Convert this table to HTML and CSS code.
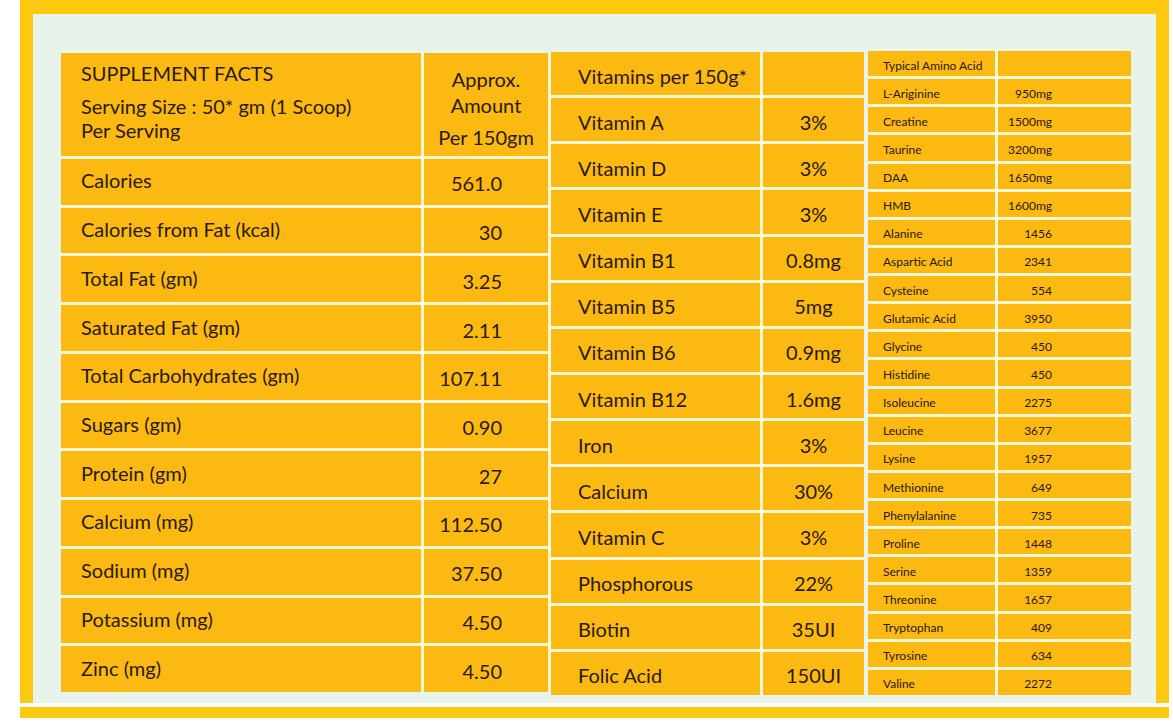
FILE: index.html
```html
<!DOCTYPE html>
<html>
<head>
<meta charset="utf-8">
<link rel="stylesheet" href="styles.css">
</head>
<body>
<div class="frame">
  <div class="panel">
    <div class="t1">
      <div class="cell h1-label">
        <div class="title">SUPPLEMENT FACTS</div>
        <div class="serving">Serving Size : 50* gm (1 Scoop)<br>Per Serving</div>
      </div>
      <div class="cell h1-value">
        <div class="amt">Approx.<br>Amount</div>
        <div class="per">Per 150gm</div>
      </div>
      <div class="cell lab">Calories</div><div class="cell val">561.0</div>
      <div class="cell lab">Calories from Fat (kcal)</div><div class="cell val">30</div>
      <div class="cell lab">Total Fat (gm)</div><div class="cell val">3.25</div>
      <div class="cell lab">Saturated Fat (gm)</div><div class="cell val">2.11</div>
      <div class="cell lab">Total Carbohydrates (gm)</div><div class="cell val">107.11</div>
      <div class="cell lab">Sugars (gm)</div><div class="cell val">0.90</div>
      <div class="cell lab">Protein (gm)</div><div class="cell val">27</div>
      <div class="cell lab">Calcium (mg)</div><div class="cell val">112.50</div>
      <div class="cell lab">Sodium (mg)</div><div class="cell val">37.50</div>
      <div class="cell lab">Potassium (mg)</div><div class="cell val">4.50</div>
      <div class="cell lab">Zinc (mg)</div><div class="cell val">4.50</div>
    </div>
    <div class="t2">
      <div class="cell lab2">Vitamins per 150g*</div><div class="cell val2"></div>
      <div class="cell lab2">Vitamin A</div><div class="cell val2">3%</div>
      <div class="cell lab2">Vitamin D</div><div class="cell val2">3%</div>
      <div class="cell lab2">Vitamin E</div><div class="cell val2">3%</div>
      <div class="cell lab2">Vitamin B1</div><div class="cell val2">0.8mg</div>
      <div class="cell lab2">Vitamin B5</div><div class="cell val2">5mg</div>
      <div class="cell lab2">Vitamin B6</div><div class="cell val2">0.9mg</div>
      <div class="cell lab2">Vitamin B12</div><div class="cell val2">1.6mg</div>
      <div class="cell lab2">Iron</div><div class="cell val2">3%</div>
      <div class="cell lab2">Calcium</div><div class="cell val2">30%</div>
      <div class="cell lab2">Vitamin C</div><div class="cell val2">3%</div>
      <div class="cell lab2">Phosphorous</div><div class="cell val2">22%</div>
      <div class="cell lab2">Biotin</div><div class="cell val2">35UI</div>
      <div class="cell lab2">Folic Acid</div><div class="cell val2">150UI</div>
    </div>
    <div class="t3">
      <div class="cell lab3">Typical Amino Acid</div><div class="cell val3"></div>
      <div class="cell lab3">L-Ariginine</div><div class="cell val3">950mg</div>
      <div class="cell lab3">Creatine</div><div class="cell val3">1500mg</div>
      <div class="cell lab3">Taurine</div><div class="cell val3">3200mg</div>
      <div class="cell lab3">DAA</div><div class="cell val3">1650mg</div>
      <div class="cell lab3">HMB</div><div class="cell val3">1600mg</div>
      <div class="cell lab3">Alanine</div><div class="cell val3">1456</div>
      <div class="cell lab3">Aspartic Acid</div><div class="cell val3">2341</div>
      <div class="cell lab3">Cysteine</div><div class="cell val3">554</div>
      <div class="cell lab3">Glutamic Acid</div><div class="cell val3">3950</div>
      <div class="cell lab3">Glycine</div><div class="cell val3">450</div>
      <div class="cell lab3">Histidine</div><div class="cell val3">450</div>
      <div class="cell lab3">Isoleucine</div><div class="cell val3">2275</div>
      <div class="cell lab3">Leucine</div><div class="cell val3">3677</div>
      <div class="cell lab3">Lysine</div><div class="cell val3">1957</div>
      <div class="cell lab3">Methionine</div><div class="cell val3">649</div>
      <div class="cell lab3">Phenylalanine</div><div class="cell val3">735</div>
      <div class="cell lab3">Proline</div><div class="cell val3">1448</div>
      <div class="cell lab3">Serine</div><div class="cell val3">1359</div>
      <div class="cell lab3">Threonine</div><div class="cell val3">1657</div>
      <div class="cell lab3">Tryptophan</div><div class="cell val3">409</div>
      <div class="cell lab3">Tyrosine</div><div class="cell val3">634</div>
      <div class="cell lab3">Valine</div><div class="cell val3">2272</div>
    </div>
  </div>
</div>
<div class="band"></div>
</body>
</html>
```
FILE: styles.css
```css
html, body {
  margin: 0;
  padding: 0;
  background: #ffffff;
}
body {
  font-family: Lato, "Open Sans", sans-serif;
  color: #2a1a0a;
}
.frame {
  margin-left: 20px;
  width: 1149px;
  height: 703px;
  box-sizing: border-box;
  background: #fdc810;
  padding: 14px 13px 0 13px;
}
.panel {
  height: 689px;
  box-sizing: border-box;
  background: #e7f3eb;
  padding: 37px 0 0 28px;
  display: flex;
  align-items: flex-start;
}
.band {
  margin-left: 20px;
  margin-top: 4px;
  width: 1149px;
  height: 11px;
  background: #fdc810;
}
.cell {
  background: #fbb912;
  display: flex;
  align-items: center;
  box-sizing: border-box;
  white-space: nowrap;
}
.t1 {
  margin-top: 2px;
  width: 487px;
  height: 639px;
  display: grid;
  grid-template-columns: 360px 124px;
  grid-template-rows: 103px repeat(11, 1fr);
  gap: 3px;
  padding-right: 3px;
  background: #fff8d6;
  font-size: 20px;
}
.h1-label {
  flex-direction: column;
  align-items: flex-start;
  justify-content: flex-start;
  padding: 8px 0 0 20px;
}
.title {
  line-height: 24px;
  margin-bottom: 9px;
}
.serving {
  line-height: 24px;
}
.h1-value {
  flex-direction: column;
  justify-content: flex-start;
  padding-top: 13px;
  text-align: center;
}
.amt {
  line-height: 26px;
}
.per {
  line-height: 26px;
  margin-top: 6px;
}
.lab {
  padding: 0 0 3px 20px;
}
.val {
  justify-content: flex-end;
  padding: 3px 46px 0 0;
}
.t2 {
  margin-top: 1px;
  width: 313px;
  height: 643px;
  display: grid;
  grid-template-columns: 209px 101px;
  grid-template-rows: repeat(14, 1fr);
  gap: 3px;
  background: #fff8d6;
  font-size: 20px;
  margin-right: 4px;
}
.lab2 {
  padding: 4px 0 0 27px;
}
.val2 {
  justify-content: center;
  padding-top: 4px;
}
.t3 {
  width: 263px;
  height: 644px;
  display: grid;
  grid-template-columns: 127px 133px;
  grid-template-rows: repeat(23, 1fr);
  gap: 3px;
  background: #fff8d6;
  font-size: 12px;
}
.lab3 {
  padding: 3px 0 0 15px;
}
.val3 {
  justify-content: flex-end;
  padding: 3px 79px 0 0;
}
```
